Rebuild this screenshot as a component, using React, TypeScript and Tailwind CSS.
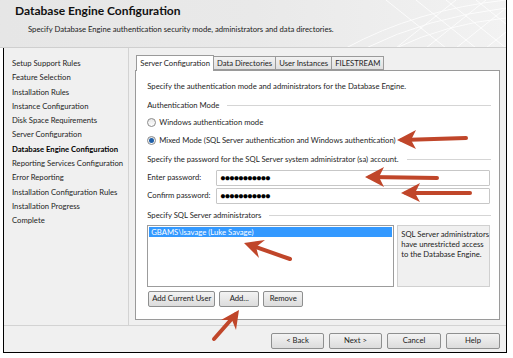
const navItems = [
  "Setup Support Rules",
  "Feature Selection",
  "Installation Rules",
  "Instance Configuration",
  "Disk Space Requirements",
  "Server Configuration",
  "Database Engine Configuration",
  "Reporting Services Configuration",
  "Error Reporting",
  "Installation Configuration Rules",
  "Installation Progress",
  "Complete",
];

const tabs = ["Server Configuration", "Data Directories", "User Instances", "FILESTREAM"];

function GroupLabel({ text }: { text: string }) {
  return (
    <div className="flex items-center gap-2 pr-[8px]">
      <span className="whitespace-nowrap">{text}</span>
      <div className="flex-1 h-px bg-[#d5d5d5]" />
    </div>
  );
}

function Radio({ checked, label }: { checked?: boolean; label: string }) {
  return (
    <div className="flex items-center gap-[3px]">
      <span className="w-[9px] h-[9px] rounded-full border border-[#8a8a8a] bg-gradient-to-b from-[#e6e6e6] to-white flex items-center justify-center">
        {checked && <span className="w-[5px] h-[5px] rounded-full bg-[#1f5fa8]" />}
      </span>
      <span className="whitespace-nowrap">{label}</span>
    </div>
  );
}

function Btn({ label, w }: { label: string; w: string }) {
  return (
    <div
      className={`${w} h-[16px] rounded-[2px] border border-[#8e8f8f] bg-gradient-to-b from-[#f3f3f3] to-[#dcdcdc] flex items-center justify-center whitespace-nowrap text-[#222]`}
    >
      {label}
    </div>
  );
}

function Arrows() {
  const c = "#c0462a";
  return (
    <svg className="absolute inset-0 pointer-events-none" width="513" height="358">
      <g stroke={c} strokeWidth="4" strokeLinecap="round" fill="none">
        <line x1="402" y1="140" x2="466" y2="138" />
        <line x1="370" y1="177" x2="437" y2="178" />
        <line x1="406" y1="193" x2="470" y2="193" />
        <line x1="250" y1="245" x2="290" y2="259" />
        <line x1="236" y1="314" x2="214" y2="339" />
      </g>
      <g fill={c}>
        <polygon points="397,140 416,130 411,140 416,149" />
        <polygon points="365,177 384,167 379,177 384,187" />
        <polygon points="401,193 420,183 415,193 420,202" />
        <polygon points="244,243 265,240 256,247 259,258" />
        <polygon points="239,310 236,330 232,320 221,320" />
      </g>
    </svg>
  );
}

export default function App() {
  return (
    <div
      className="relative w-[513px] h-[358px] bg-white overflow-hidden text-[7.7px] text-[#1e1e1e]"
      style={{ fontFamily: 'Lato, "Open Sans", sans-serif' }}
    >
      <div className="w-[507px] border-r border-black">
        {/* header */}
        <div className="relative h-[48px] bg-gradient-to-r from-[#e6e6e6] via-[#e9e9e9] to-[#f2f2f2] border-b border-[#cfcfcf] overflow-hidden">
          <svg className="absolute right-0 top-0" width="180" height="48">
            <g stroke="#ffffff" strokeWidth="1" fill="none" opacity="0.8">
              <path d="M20 48 Q90 10 180 0" />
              <path d="M40 48 Q100 18 180 8" />
              <path d="M70 48 Q120 24 180 18" />
              <path d="M60 0 L120 48 M90 0 L150 48 M120 0 L180 48 M150 0 L180 24" />
              <path d="M100 48 L160 0 M130 48 L180 8 M70 48 L130 0 M160 48 L180 32" />
            </g>
          </svg>
          <div className="relative pl-[15px] pt-[2px] text-[12px] font-bold text-[#111]">
            Database Engine Configuration
          </div>
          <div className="relative pl-[28px] pt-[4px] text-[#222]">
            Specify Database Engine authentication security mode, administrators and data directories.
          </div>
        </div>

        <div className="ml-[3px] h-[305px] border-l border-b border-black bg-[#f0f0f0] flex flex-col">
          <div className="flex h-[278px] border-b border-[#d3d3d3]">
            {/* nav */}
            <div className="w-[127px] border-r border-[#d3d3d3] pl-[8px] pt-[8px] flex flex-col">
              {navItems.map((n) => (
                <div
                  key={n}
                  className={`h-[14.3px] leading-[14.3px] whitespace-nowrap ${
                    n === "Database Engine Configuration" ? "font-bold text-black" : ""
                  }`}
                >
                  {n}
                </div>
              ))}
            </div>

            {/* content */}
            <div className="flex-1 pl-[6px] pt-[6px] pr-[6px]">
              <div className="flex items-end h-[16px] pl-[1px]">
                {tabs.map((t, i) => (
                  <div
                    key={t}
                    className={`px-[3px] border border-[#9a9a9a] whitespace-nowrap ${
                      i === 0
                        ? "h-[16px] bg-white border-b-0 -mb-px z-10 leading-[14px]"
                        : "h-[14px] bg-gradient-to-b from-[#f2f2f2] to-[#e0e0e0] border-l-0 leading-[13px]"
                    }`}
                  >
                    {t}
                  </div>
                ))}
              </div>
              <div className="h-[250px] bg-white border border-[#9a9a9a] pl-[11px] pt-[8px] flex flex-col">
                <div className="h-[14px] leading-[14px]">
                  Specify the authentication mode and administrators for the Database Engine.
                </div>
                <div className="mt-[5px] h-[14px] leading-[14px]">
                  <GroupLabel text="Authentication Mode" />
                </div>
                <div className="mt-[4px] h-[14px] flex items-center">
                  <Radio label="Windows authentication mode" />
                </div>
                <div className="mt-[4px] h-[14px] flex items-center">
                  <Radio checked label="Mixed Mode (SQL Server authentication and Windows authentication)" />
                </div>
                <div className="mt-[4px] h-[14px] leading-[14px]">
                  <GroupLabel text="Specify the password for the SQL Server system administrator (sa) account." />
                </div>
                <div className="mt-[4px] flex flex-col gap-[2px] pr-[9px]">
                  {["Enter password:", "Confirm password:"].map((l) => (
                    <div key={l} className="flex items-center h-[16px]">
                      <span className="w-[69px] whitespace-nowrap">{l}</span>
                      <div className="flex-1 h-[16px] border border-[#c7c7c7] rounded-[1px] pl-[3px] flex items-center text-[8.5px] tracking-[-0.6px] leading-none text-black">
                        ●●●●●●●●●●●
                      </div>
                    </div>
                  ))}
                </div>
                <div className="mt-[4px] h-[14px] leading-[14px]">
                  <GroupLabel text="Specify SQL Server administrators" />
                </div>
                <div className="mt-[3px] flex gap-[3px] pr-[9px] h-[62px]">
                  <div className="w-[247px] border border-[#9c9c9c] p-px">
                    <div className="h-[10px] leading-[10px] bg-[#3399ff] text-white pl-[2px]">
                      GBAMS\lsavage (Luke Savage)
                    </div>
                  </div>
                  <div className="flex-1 border border-[#d0d0d0] bg-[#f0f0f0] pl-[3px] pt-[3px] leading-[10px] text-[#222] whitespace-nowrap">
                    SQL Server administrators
                    <br />
                    have unrestricted access
                    <br />
                    to the Database Engine.
                  </div>
                </div>
                <div className="mt-[4px] flex gap-[4px] pl-[1px]">
                  <Btn label="Add Current User" w="w-[67px]" />
                  <Btn label="Add..." w="w-[40px]" />
                  <Btn label="Remove" w="w-[40px]" />
                </div>
              </div>
            </div>
          </div>

          {/* footer */}
          <div className="flex-1 flex items-center justify-end gap-[5px] pr-[6px] pt-[4px]">
            <Btn label="< Back" w="w-[53px]" />
            <Btn label="Next >" w="w-[53px]" />
            <Btn label="Cancel" w="w-[54px]" />
            <Btn label="Help" w="w-[54px]" />
          </div>
        </div>
      </div>
      <Arrows />
    </div>
  );
}
